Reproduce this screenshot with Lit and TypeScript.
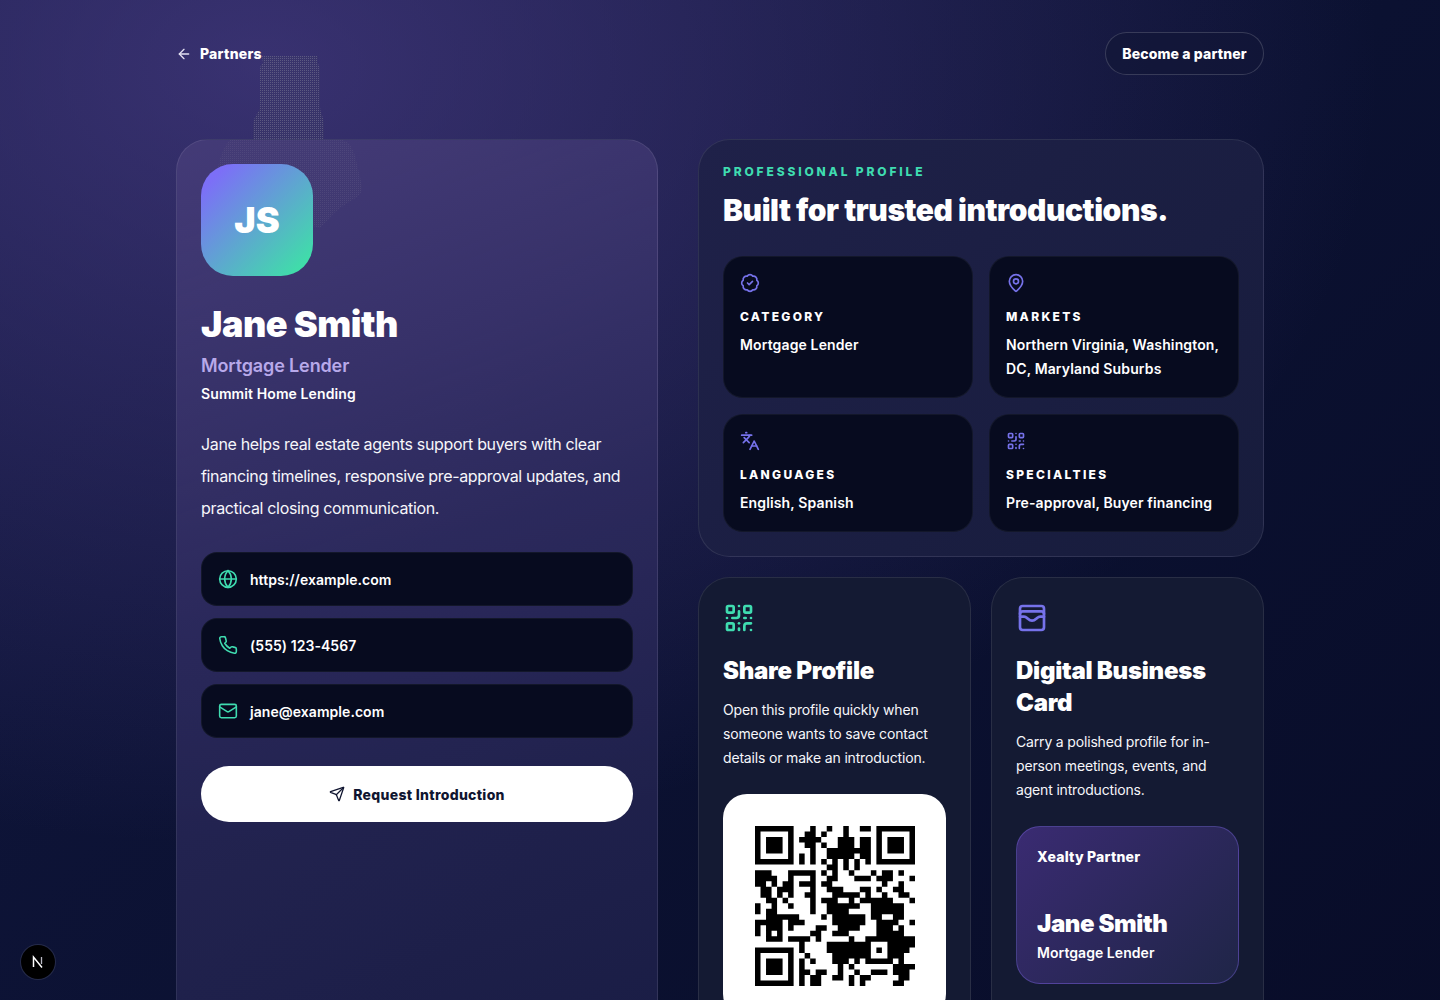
import { LitElement, html, css, svg } from "lit";
import { customElement } from "lit/decorators.js";

const ICONS: Record<string, unknown> = {
  back: svg`<path d="m12 19-7-7 7-7"/><path d="M19 12H5"/>`,
  badge: svg`<path d="M3.85 8.62a4 4 0 0 1 4.78-4.77 4 4 0 0 1 6.74 0 4 4 0 0 1 4.78 4.78 4 4 0 0 1 0 6.74 4 4 0 0 1-4.77 4.78 4 4 0 0 1-6.75 0 4 4 0 0 1-4.78-4.77 4 4 0 0 1 0-6.76Z"/><path d="m9 12 2 2 4-4"/>`,
  pin: svg`<path d="M20 10c0 4.993-5.539 10.193-7.399 11.799a1 1 0 0 1-1.202 0C9.539 20.193 4 14.993 4 10a8 8 0 0 1 16 0"/><circle cx="12" cy="10" r="3"/>`,
  lang: svg`<path d="m5 8 6 6"/><path d="m4 14 6-6 2-3"/><path d="M2 5h12"/><path d="M7 2h1"/><path d="m22 22-5-10-5 10"/><path d="M14 18h6"/>`,
  qr: svg`<rect width="5" height="5" x="3" y="3" rx="1"/><rect width="5" height="5" x="16" y="3" rx="1"/><rect width="5" height="5" x="3" y="16" rx="1"/><path d="M21 16h-3a2 2 0 0 0-2 2v3"/><path d="M21 21v.01"/><path d="M12 7v3a2 2 0 0 1-2 2H7"/><path d="M3 12h.01"/><path d="M12 3h.01"/><path d="M12 16v.01"/><path d="M16 12h1"/><path d="M21 12v.01"/><path d="M12 21v-1"/>`,
  globe: svg`<circle cx="12" cy="12" r="10"/><path d="M12 2a14.5 14.5 0 0 0 0 20 14.5 14.5 0 0 0 0-20"/><path d="M2 12h20"/>`,
  phone: svg`<path d="M22 16.92v3a2 2 0 0 1-2.18 2 19.79 19.79 0 0 1-8.63-3.07 19.5 19.5 0 0 1-6-6 19.79 19.79 0 0 1-3.07-8.67A2 2 0 0 1 4.11 2h3a2 2 0 0 1 2 1.72 12.84 12.84 0 0 0 .7 2.81 2 2 0 0 1-.45 2.11L8.09 9.91a16 16 0 0 0 6 6l1.27-1.27a2 2 0 0 1 2.11-.45 12.84 12.84 0 0 0 2.81.7A2 2 0 0 1 22 16.92z"/>`,
  mail: svg`<path d="m22 7-8.97 5.7a1.94 1.94 0 0 1-2.06 0L2 7"/><rect x="2" y="4" width="20" height="16" rx="2"/>`,
  send: svg`<path d="M14.536 21.686a.5.5 0 0 0 .937-.024l6.5-19a.496.496 0 0 0-.635-.635l-19 6.5a.5.5 0 0 0-.024.937l7.93 3.18a2 2 0 0 1 1.112 1.11z"/><path d="m21.854 2.147-10.94 10.939"/>`,
  wallet: svg`<rect x="3" y="3" width="18" height="18" rx="2"/><path d="M3 9a2 2 0 0 1 2-2h14a2 2 0 0 1 2 2"/><path d="M3 11h3c.8 0 1.6.3 2.1.9l1.1.9c1.6 1.6 4.1 1.6 5.7 0l1.1-.9c.5-.5 1.3-.9 2.1-.9H21"/>`,
};

const icon = (name: string, cls: string) =>
  html`<svg class="icon ${cls}" viewBox="0 0 24 24" fill="none" stroke="currentColor" stroke-width="2" stroke-linecap="round" stroke-linejoin="round" aria-hidden="true">${ICONS[name]}</svg>`;

/* Each row lists the black columns of the 29×29 code, finder patterns excluded. */
const QR_ROWS = [
  "10,13,16,19-20", "9-10,12,16", "8-11,15-17,19-20", "9-10,12,15-17,19-20",
  "10,13-20", "8,10,13-17,19-20", "8,10,12,14,16,18,20", "13-14,16,18",
  "0-2,6-10,12,14,17,21,23-24,26", "0-3,6,10,13-14,18-20,22-24,28",
  "0-1,3,5-6,8-10,12-13,23,26", "1-2,4-6,10,13-15,19-20,22,25-26",
  "1-2,4,6,9-10,14-18,20,23,26-27", "2-3,5,10,12-14,17,19-24,28",
  "0,3,6,10,13-18,21-26", "0,2-3,10,13-16,21-26", "2-7,12,14-19,21-22,25-26",
  "0-4,6-8,14-19,22-25,28", "0,2-4,6,11-12,15-18,22-24,26", "0,2,4,10-11,14-16,22-26",
  "2-4,6-9,11,17,20-28", "8,13-20,24-28", "8,13-20,22,24-27", "9,14-20,24-26",
  "8,10,14-16,18,20-24,26", "8,15,17,25-28", "8-9,11-12,15,18,21-23,25-27",
  "8,10-11,14-15,17,19-20,26-27", "8,10-11,17,19,25-26",
];

function qrPath(): string {
  let d = "";
  const cell = (x: number, y: number, w: number, h: number) => {
    d += `M${x} ${y}h${w}v${h}h${-w}z`;
  };
  QR_ROWS.forEach((row, y) => {
    row.split(",").forEach((span) => {
      const [a, b] = span.split("-").map(Number);
      cell(a, y, (b ?? a) - a + 1, 1);
    });
  });
  for (const [fx, fy] of [[0, 0], [22, 0], [0, 22]]) {
    cell(fx, fy, 7, 1);
    cell(fx, fy + 6, 7, 1);
    cell(fx, fy + 1, 1, 5);
    cell(fx + 6, fy + 1, 1, 5);
    cell(fx + 2, fy + 2, 3, 3);
  }
  return d;
}

@customElement("app-root")
export class AppRoot extends LitElement {
  static styles = css`
    :host {
      display: block;
      min-height: 100vh;
      position: relative;
      overflow: hidden;
      color: #fff;
      font-family: Inter, "Liberation Sans", sans-serif;
      background:
        radial-gradient(ellipse 1120px 780px at 18% 6%, rgba(78, 64, 140, 0.66), rgba(78, 64, 140, 0.34) 48%, rgba(78, 64, 140, 0) 100%),
        linear-gradient(135deg, #11173f 0%, #0b1131 55%, #080c28 100%);
    }
    .ghost {
      position: absolute;
      left: 217px;
      top: 55px;
      width: 146px;
      height: 174px;
    }
    .page {
      position: relative;
      box-sizing: border-box;
      width: 1088px;
      margin: 0 auto;
      padding: 32px 0 40px;
    }
    header {
      display: flex;
      align-items: center;
      justify-content: space-between;
      margin-bottom: 64px;
    }
    .back {
      display: flex;
      align-items: center;
      gap: 8px;
      font-size: 14px;
      font-weight: 800;
      letter-spacing: 0.25px;
    }
    .back .icon { width: 16px; height: 16px; color: #e4e1f2; }
    .become {
      box-sizing: border-box;
      height: 43px;
      width: 159px;
      display: flex;
      align-items: center;
      justify-content: center;
      border-radius: 22px;
      border: 1px solid rgba(255, 255, 255, 0.16);
      background: rgba(18, 22, 56, 0.72);
      font-size: 14px;
      font-weight: 800;
      letter-spacing: 0.13px;
    }
    .layout {
      display: grid;
      grid-template-columns: 482px 566px;
      gap: 40px;
      align-items: stretch;
    }
    .panel {
      box-sizing: border-box;
      border-radius: 32px;
      border: 1px solid rgba(255, 255, 255, 0.09);
      padding: 24px;
    }
    .profile {
      background: linear-gradient(160deg, rgba(72, 62, 122, 0.8), rgba(52, 48, 102, 0.66) 45%, rgba(34, 36, 80, 0.66) 100%);
    }
    .avatar {
      width: 112px;
      height: 112px;
      border-radius: 32px;
      display: flex;
      align-items: center;
      justify-content: center;
      background: linear-gradient(135deg, #7c6ff7 12%, #3fdfa8 92%);
      font-size: 36px;
      font-weight: 900;
    }
    h1 {
      margin: 24px 0 0;
      font-size: 36px;
      line-height: 48px;
      font-weight: 900;
      letter-spacing: -0.5px;
    }
    .role {
      margin-top: 4px;
      font-size: 18px;
      line-height: 28px;
      font-weight: 600;
      letter-spacing: -0.13px;
      color: #b8a9ea;
    }
    .company {
      margin-top: 4px;
      font-size: 14px;
      line-height: 20px;
      font-weight: 600;
      letter-spacing: 0.1px;
    }
    .bio {
      margin: 24px 0 0;
      font-size: 16px;
      line-height: 32px;
      letter-spacing: -0.34px;
      color: #f6f6fa;
    }
    .contacts {
      display: flex;
      flex-direction: column;
      gap: 12px;
      margin-top: 28px;
    }
    .contact {
      box-sizing: border-box;
      height: 54px;
      display: flex;
      align-items: center;
      gap: 12px;
      padding: 0 16px;
      border-radius: 16px;
      border: 1px solid rgba(255, 255, 255, 0.05);
      background: #070b1f;
      font-size: 14px;
      font-weight: 600;
      letter-spacing: 0.05px;
    }
    .contact .icon { width: 20px; height: 20px; color: #3fdcb0; stroke-width: 1.9; }
    .cta {
      margin-top: 28px;
      height: 56px;
      border-radius: 28px;
      background: #fff;
      color: #101530;
      display: flex;
      align-items: center;
      justify-content: center;
      gap: 8px;
      font-size: 14px;
      font-weight: 800;
      letter-spacing: 0.3px;
    }
    .cta .icon { width: 16px; height: 16px; stroke-width: 1.9; }
    .right { display: flex; flex-direction: column; gap: 20px; }
    .about { background: linear-gradient(135deg, #1f2149, #171c3c); height: 418px; }
    .eyebrow {
      font-size: 12px;
      line-height: 16px;
      font-weight: 800;
      letter-spacing: 2.85px;
      color: #3fdcb0;
    }
    h2 {
      margin: 8px 0 0;
      font-size: 30px;
      line-height: 44px;
      font-weight: 900;
      letter-spacing: -0.44px;
    }
    .facts {
      display: grid;
      grid-template-columns: 1fr 1fr;
      grid-template-rows: 142px 118px;
      gap: 16px;
      margin-top: 24px;
    }
    .fact {
      box-sizing: border-box;
      padding: 16px;
      border-radius: 20px;
      border: 1px solid rgba(255, 255, 255, 0.05);
      background: #070b1f;
    }
    .fact .icon { display: block; width: 20px; height: 20px; color: #7672ea; }
    .label {
      margin-top: 16px;
      font-size: 12px;
      line-height: 16px;
      font-weight: 800;
      letter-spacing: 2.3px;
    }
    .value {
      margin-top: 8px;
      font-size: 14px;
      line-height: 24px;
      font-weight: 600;
      letter-spacing: 0.13px;
    }
    .cards { display: grid; grid-template-columns: 273px 273px; gap: 20px; }
    .tile { background: #141a33; height: 480px; }
    .tile > .icon { display: block; width: 32px; height: 32px; }
    .mint { color: #3fdcb0; }
    .violet { color: #7672ea; }
    h3 {
      margin: 21px 0 0;
      font-size: 24px;
      line-height: 32px;
      font-weight: 900;
      letter-spacing: -0.27px;
    }
    .tile p {
      margin: 11px 0 0;
      font-size: 14px;
      line-height: 24px;
      letter-spacing: -0.17px;
      color: #f6f6fa;
    }
    .qrbox {
      margin-top: 24px;
      padding: 32px;
      border-radius: 24px;
      background: #fff;
    }
    .qrbox svg { display: block; width: 160px; height: 160px; }
    .mini {
      box-sizing: border-box;
      height: 158px;
      margin-top: 24px;
      padding: 20px;
      border-radius: 24px;
      border: 1px solid rgba(118, 100, 220, 0.42);
      background: linear-gradient(135deg, #3a2b72, #1f2547);
      display: flex;
      flex-direction: column;
    }
    .mini .brand { font-size: 14px; line-height: 20px; font-weight: 800; letter-spacing: 0.2px; }
    .mini .who { margin-top: auto; font-size: 24px; line-height: 32px; font-weight: 900; letter-spacing: -0.4px; }
    .mini .job { margin-top: 3px; font-size: 14px; line-height: 20px; font-weight: 600; letter-spacing: 0.05px; }
    .next {
      position: absolute;
      left: 21px;
      top: 945px;
      width: 34px;
      height: 34px;
      border-radius: 50%;
      background: #000;
      box-shadow: 0 0 0 1px rgba(255, 255, 255, 0.1);
      display: flex;
      align-items: center;
      justify-content: center;
    }
    .next svg { width: 16px; height: 16px; }
  `;

  render() {
    return html`
      <svg class="ghost" viewBox="217 55 146 174" aria-hidden="true">
        <defs>
          <pattern id="dots" width="2" height="2" patternUnits="userSpaceOnUse">
            <rect width="1" height="1" fill="#77778a" />
            <rect x="1" y="1" width="1" height="1" fill="#3c3c60" />
          </pattern>
        </defs>
        <path fill="url(#dots)" opacity="0.6" d="M262 56h56l-1 7q3 2 3 8v36q0 4 2 8q2 5 2 10v14h-71v-12q0-8 4-13q3-4 3-9V70q0-5 3-7z" />
        <path fill="url(#dots)" opacity="0.8" d="M230 140h113q10 4 13 20l6 26q1 8-8 13-12 7-20 14l-14 15-103-30-0-15q0-28 13-43z" />
      </svg>
      <div class="page">
        <header>
          <div class="back">${icon("back", "")}<span>Partners</span></div>
          <div class="become">Become a partner</div>
        </header>
        <div class="layout">
          <section class="panel profile">
            <div class="avatar">JS</div>
            <h1>Jane Smith</h1>
            <div class="role">Mortgage Lender</div>
            <div class="company">Summit Home Lending</div>
            <p class="bio">Jane helps real estate agents support buyers with clear financing timelines, responsive pre-approval updates, and practical closing communication.</p>
            <div class="contacts">
              <div class="contact">${icon("globe", "")}https://example.com</div>
              <div class="contact">${icon("phone", "")}(555) 123-4567</div>
              <div class="contact">${icon("mail", "")}jane@example.com</div>
            </div>
            <div class="cta">${icon("send", "")}Request Introduction</div>
          </section>
          <div class="right">
            <section class="panel about">
              <div class="eyebrow">PROFESSIONAL PROFILE</div>
              <h2>Built for trusted introductions.</h2>
              <div class="facts">
                <div class="fact">${icon("badge", "")}<div class="label">CATEGORY</div><div class="value">Mortgage Lender</div></div>
                <div class="fact">${icon("pin", "")}<div class="label">MARKETS</div><div class="value">Northern Virginia, Washington, DC, Maryland Suburbs</div></div>
                <div class="fact">${icon("lang", "")}<div class="label">LANGUAGES</div><div class="value">English, Spanish</div></div>
                <div class="fact">${icon("qr", "")}<div class="label">SPECIALTIES</div><div class="value">Pre-approval, Buyer financing</div></div>
              </div>
            </section>
            <div class="cards">
              <section class="panel tile">
                ${icon("qr", "mint")}
                <h3>Share Profile</h3>
                <p>Open this profile quickly when someone wants to save contact details or make an introduction.</p>
                <div class="qrbox">
                  <svg viewBox="0 0 29 29" aria-label="QR code"><path d="${qrPath()}" fill="#000" /></svg>
                </div>
              </section>
              <section class="panel tile">
                ${icon("wallet", "violet")}
                <h3>Digital Business Card</h3>
                <p>Carry a polished profile for in-person meetings, events, and agent introductions.</p>
                <div class="mini">
                  <div class="brand">Xealty Partner</div>
                  <div class="who">Jane Smith</div>
                  <div class="job">Mortgage Lender</div>
                </div>
              </section>
            </div>
          </div>
        </div>
      </div>
      <div class="next">
        <svg viewBox="0 0 16 16" aria-hidden="true"><path d="M3.5 13V3l8.5 10.5" fill="none" stroke="#fff" stroke-width="1.5" /><path d="M11.5 3v7" fill="none" stroke="#b9b9c4" stroke-width="1.3" /></svg>
      </div>
    `;
  }
}
